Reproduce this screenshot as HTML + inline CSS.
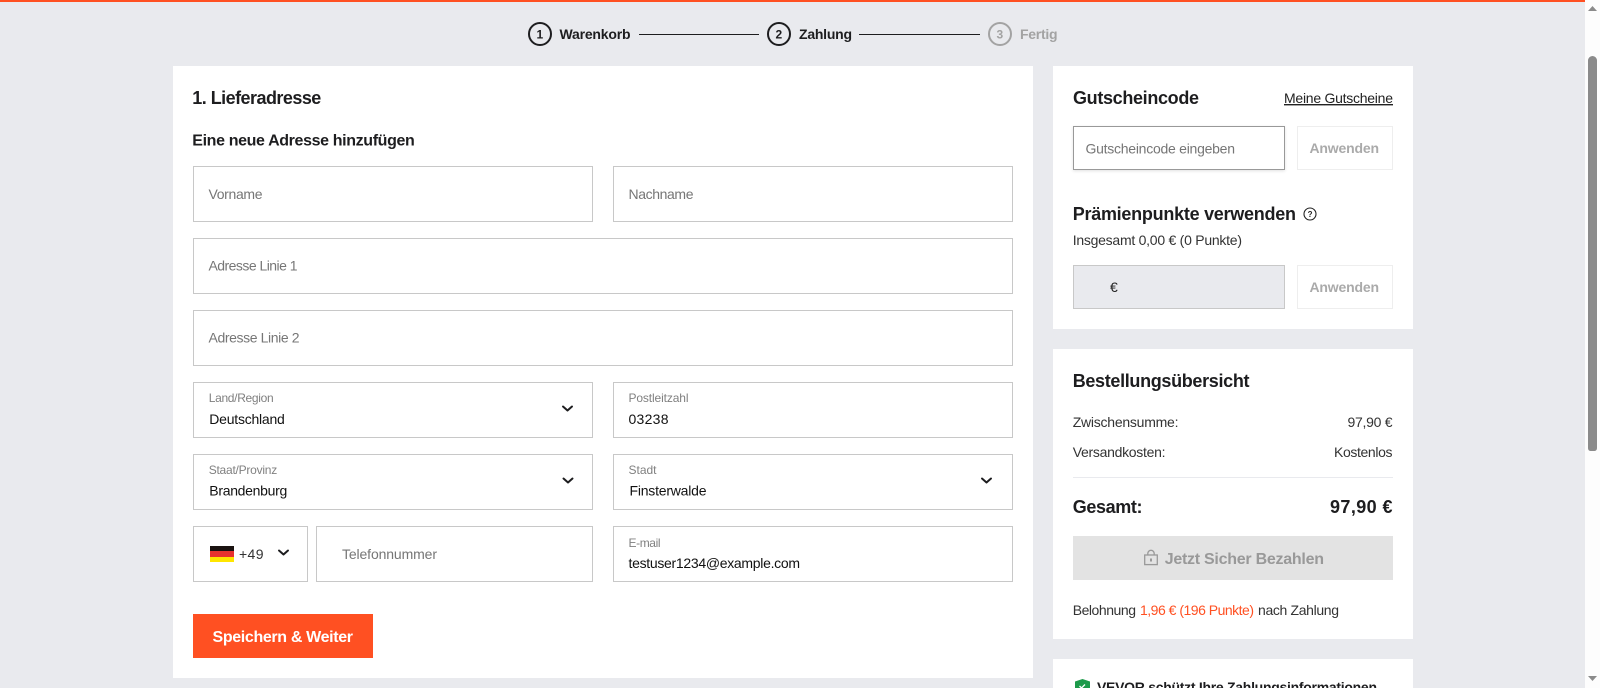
<!DOCTYPE html>
<html lang="de">
<head>
<meta charset="utf-8">
<title>Checkout</title>
<style>
html,body{margin:0;padding:0;width:1600px;height:688px;overflow:hidden;background:#e9eaee;font-family:"Liberation Sans",sans-serif}
.b{position:absolute;box-sizing:border-box}
.card{background:#fff}
.f{border:1px solid #c8c8c8;background:#fff;height:56px}
svg.o{position:absolute;left:0;top:0;width:1600px;height:688px}
text{font-family:"Liberation Sans",sans-serif;font-size:14px;fill:#333;white-space:pre}
.h{font-weight:bold;font-size:18px;fill:#1d1d1f}
.s{font-weight:bold;fill:#1d1d1f}
.p{fill:#767676}
.l{font-size:12px;fill:#808080}
.v{fill:#111}
.a{font-weight:bold;fill:#aaa}
.c{fill:none;stroke:#1d1d1f;stroke-width:2;stroke-linecap:round;stroke-linejoin:round}
</style>
</head>
<body>
<div class="b" style="left:0;top:0;width:1585px;height:2px;background:#ff5022"></div>

<div class="b card" style="left:173px;top:66px;width:860px;height:612px"></div>
<div class="b card" style="left:1053px;top:66px;width:360px;height:263px"></div>
<div class="b card" style="left:1053px;top:349px;width:360px;height:290px"></div>
<div class="b card" style="left:1053px;top:659px;width:360px;height:29px"></div>

<div class="b f" style="left:193px;top:166px;width:400px"></div>
<div class="b f" style="left:613px;top:166px;width:400px"></div>
<div class="b f" style="left:193px;top:238px;width:820px"></div>
<div class="b f" style="left:193px;top:310px;width:820px"></div>
<div class="b f" style="left:193px;top:382px;width:400px"></div>
<div class="b f" style="left:613px;top:382px;width:400px"></div>
<div class="b f" style="left:193px;top:454px;width:400px"></div>
<div class="b f" style="left:613px;top:454px;width:400px"></div>
<div class="b f" style="left:193px;top:526px;width:115px"></div>
<div class="b f" style="left:316px;top:526px;width:277px"></div>
<div class="b f" style="left:613px;top:526px;width:400px"></div>
<div class="b" style="left:193px;top:614px;width:180px;height:44px;background:#ff5022"></div>

<div class="b" style="left:1073px;top:126px;width:212px;height:44px;background:#fff;border:1px solid #999;box-shadow:0 1px 3px rgba(0,0,0,.12)"></div>
<div class="b" style="left:1297px;top:126px;width:96px;height:44px;background:#fff;border:1px solid #eee"></div>
<div class="b" style="left:1073px;top:265px;width:212px;height:44px;background:#e9eaee;border:1px solid #c8c8c8"></div>
<div class="b" style="left:1297px;top:265px;width:96px;height:44px;background:#fff;border:1px solid #eee"></div>
<div class="b" style="left:1073px;top:477px;width:320px;height:1px;background:#e9eaee"></div>
<div class="b" style="left:1073px;top:536px;width:320px;height:44px;background:#e3e3e3"></div>

<div class="b" style="left:210px;top:546px;width:24px;height:5.4px;background:#1a1311"></div>
<div class="b" style="left:210px;top:551px;width:24px;height:6px;background:#e8322e"></div>
<div class="b" style="left:210px;top:557px;width:24px;height:5px;background:#ffe600"></div>

<div class="b" style="left:639px;top:34px;width:120px;height:1px;background:#1d1d1f"></div>
<div class="b" style="left:859px;top:34px;width:121px;height:1px;background:#1d1d1f"></div>

<div class="b" style="left:1585px;top:0;width:15px;height:688px;background:#fdfdfd"></div>
<div class="b" style="left:1588px;top:56px;width:9px;height:395px;background:#8b8b8b;border-radius:5px 5px 3px 3px"></div>

<svg class="o" viewBox="0 0 1600 688" xmlns="http://www.w3.org/2000/svg">
<polygon points="1592.5,6 1597,11 1588,11" fill="#8b8b8b"/>
<polygon points="1592.5,681 1597,676 1588,676" fill="#8b8b8b"/>

<circle cx="540" cy="34" r="11" fill="none" stroke="#1d1d1f" stroke-width="2"/>
<circle cx="779" cy="34" r="11" fill="none" stroke="#1d1d1f" stroke-width="2"/>
<circle cx="1000" cy="34" r="11" fill="none" stroke="#a3a3a3" stroke-width="2"/>
<text x="536.5" y="38.5" style="font-size:12px;font-weight:bold;fill:#1d1d1f">1</text>
<text x="775.5" y="38.5" style="font-size:12px;font-weight:bold;fill:#1d1d1f">2</text>
<text x="996.5" y="38.5" style="font-size:12px;font-weight:bold;fill:#a3a3a3">3</text>
<text class="s" x="559.5" y="39" textLength="71" lengthAdjust="spacing">Warenkorb</text>
<text class="s" x="799" y="39" textLength="53" lengthAdjust="spacing">Zahlung</text>
<text x="1020" y="39" textLength="37.5" lengthAdjust="spacing" style="font-weight:bold;fill:#a3a3a3">Fertig</text>

<text class="h" x="192.3" y="104" textLength="129" lengthAdjust="spacing">1. Lieferadresse</text>
<text class="s" x="192.3" y="145.5" textLength="222.5" lengthAdjust="spacing" style="font-size:16px">Eine neue Adresse hinzufügen</text>

<text class="p" x="208.5" y="199" textLength="54" lengthAdjust="spacing">Vorname</text>
<text class="p" x="628.5" y="199" textLength="65" lengthAdjust="spacing">Nachname</text>
<text class="p" x="208.5" y="270.5" textLength="89" lengthAdjust="spacing">Adresse Linie 1</text>
<text class="p" x="208.5" y="342.5" textLength="91" lengthAdjust="spacing">Adresse Linie 2</text>

<text class="l" x="208.7" y="402" textLength="65" lengthAdjust="spacing">Land/Region</text>
<text class="v" x="209.3" y="424" textLength="75.5" lengthAdjust="spacing">Deutschland</text>
<text class="l" x="628.5" y="402" textLength="60" lengthAdjust="spacing">Postleitzahl</text>
<text class="v" x="628.5" y="424" textLength="40" lengthAdjust="spacing">03238</text>
<text class="l" x="208.7" y="474" textLength="68.5" lengthAdjust="spacing">Staat/Provinz</text>
<text class="v" x="209.3" y="495.5" textLength="78" lengthAdjust="spacing">Brandenburg</text>
<text class="l" x="628.5" y="474" textLength="28" lengthAdjust="spacing">Stadt</text>
<text class="v" x="629.5" y="495.5" textLength="77" lengthAdjust="spacing">Finsterwalde</text>
<text x="239" y="559" textLength="24.5" lengthAdjust="spacing">+49</text>
<text class="p" x="342" y="559" textLength="95" lengthAdjust="spacing">Telefonnummer</text>
<text class="l" x="628.5" y="547" textLength="32" lengthAdjust="spacing">E-mail</text>
<text class="v" x="628.5" y="568" textLength="171.5" lengthAdjust="spacing">testuser1234@example.com</text>

<path class="c" d="M563 406.5l4.5 4 4.5-4"/>
<path class="c" d="M563.5 478.5l4.5 4 4.5-4"/>
<path class="c" d="M982 478.5l4.5 4 4.5-4"/>
<path class="c" d="M279 550.5l4.5 4 4.5-4"/>

<text x="212.5" y="642" textLength="140.5" lengthAdjust="spacing" style="font-weight:bold;font-size:16px;fill:#fff">Speichern &amp; Weiter</text>

<text class="h" x="1073" y="104" textLength="126" lengthAdjust="spacing">Gutscheincode</text>
<text x="1284" y="103" textLength="109" lengthAdjust="spacing" style="fill:#222;text-decoration:underline">Meine Gutscheine</text>
<text class="p" x="1085.5" y="153.5" textLength="149.5" lengthAdjust="spacing">Gutscheincode eingeben</text>
<text class="a" x="1309.5" y="153" textLength="69.5" lengthAdjust="spacing">Anwenden</text>
<text class="h" x="1072.7" y="220" textLength="223.3" lengthAdjust="spacing">Prämienpunkte verwenden</text>
<circle cx="1310" cy="214" r="6" fill="none" stroke="#222" stroke-width="1.1"/>
<text x="1307.6" y="217" style="font-size:8px;font-weight:bold;fill:#222">?</text>
<text x="1072.7" y="245" textLength="169.3" lengthAdjust="spacing">Insgesamt 0,00 € (0 Punkte)</text>
<text x="1110" y="292" style="fill:#222">€</text>
<text class="a" x="1309.5" y="292" textLength="69.5" lengthAdjust="spacing">Anwenden</text>

<text class="h" x="1072.7" y="387" textLength="176.8" lengthAdjust="spacing">Bestellungsübersicht</text>
<text x="1072.7" y="427" textLength="105.8" lengthAdjust="spacing">Zwischensumme:</text>
<text x="1347.5" y="427" textLength="45" lengthAdjust="spacing">97,90 €</text>
<text x="1072.7" y="457" textLength="92.8" lengthAdjust="spacing">Versandkosten:</text>
<text x="1334" y="457" textLength="58.5" lengthAdjust="spacing">Kostenlos</text>
<text class="h" x="1072.7" y="513" textLength="69.8" lengthAdjust="spacing">Gesamt:</text>
<text class="h" x="1330" y="513" textLength="62.5" lengthAdjust="spacing">97,90 €</text>

<g fill="none" stroke="#999" stroke-width="1.3">
<rect x="1144.7" y="555" width="12.6" height="9.6"/>
<path d="M1147.8 555v-1.5a3.2 3.2 0 0 1 6.4 0v1.5"/>
</g>
<rect x="1150" y="558.5" width="2" height="3" fill="#999"/>
<text x="1164.7" y="564" textLength="159.3" lengthAdjust="spacing" style="font-weight:bold;font-size:16px;fill:#999">Jetzt Sicher Bezahlen</text>

<text x="1072.7" y="615" textLength="63.3" lengthAdjust="spacing">Belohnung</text>
<text x="1140" y="615" textLength="114" lengthAdjust="spacing" style="fill:#ff5022">1,96 € (196 Punkte)</text>
<text x="1258" y="615" textLength="81" lengthAdjust="spacing">nach Zahlung</text>

<path d="M1082.5 679l7.5 2.5v6.5h-15v-6.5z" fill="#1c9a4a"/>
<path d="M1079.5 686l2 2 3.5-3.5" fill="none" stroke="#fff" stroke-width="1.3"/>
<text class="s" x="1097" y="692" textLength="280" lengthAdjust="spacing">VEVOR schützt Ihre Zahlungsinformationen</text>
</svg>
</body>
</html>
